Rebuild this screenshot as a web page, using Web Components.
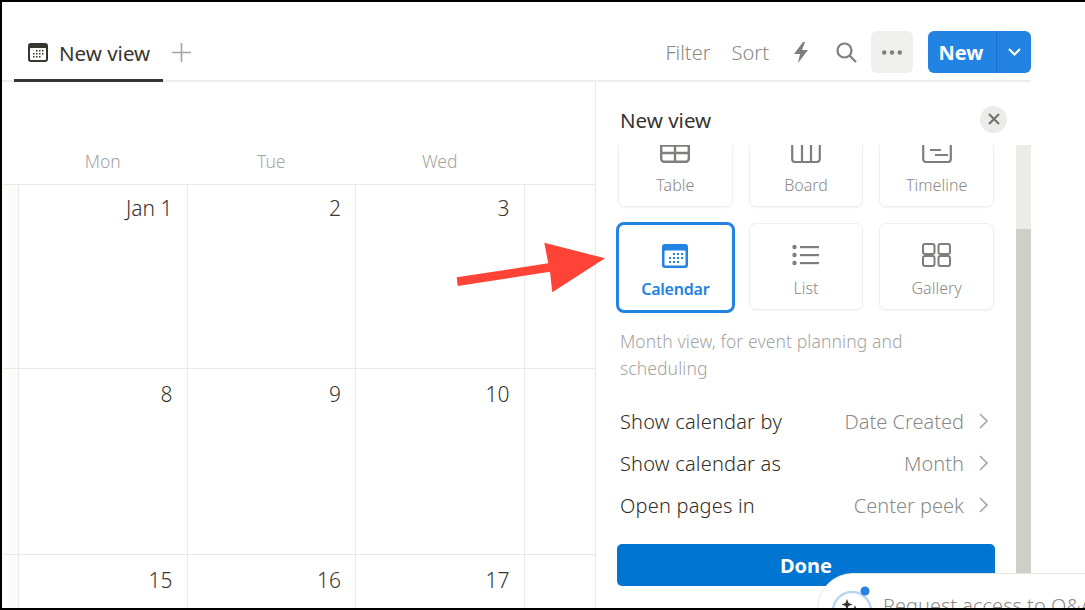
<!DOCTYPE html>
<html>
<head>
<meta charset="utf-8">
<title>New view</title>
<style>
  html, body { margin: 0; height: 100%; overflow: hidden; background: #fff; }
  body { font-family: "Noto Sans", "Open Sans", sans-serif; color: #37352f; }
</style>
</head>
<body>
<app-frame>
  <top-bar></top-bar>
  <div slot="main">
    <calendar-grid></calendar-grid>
    <view-panel>
      <layout-card name="Table">
        <svg style="margin-bottom:6px" viewBox="0 0 30 28" width="30" height="28" fill="none" stroke="#7f7e7a" stroke-width="2.400"><rect x="1.200" y="1.200" width="27.600" height="25.600" rx="3"/><path d="M1 10.500H29M1 18H29M15 10V27"/></svg>
      </layout-card>
      <layout-card name="Board">
        <svg style="margin-bottom:6px" viewBox="0 0 30 28" width="30" height="28" fill="none" stroke="#7f7e7a" stroke-width="2.200"><path d="M1.200 0V24a3 3 0 0 0 3 3H25.800a3 3 0 0 0 3-3V0M11 0V27M20 0V27"/></svg>
      </layout-card>
      <layout-card name="Timeline">
        <svg style="margin-bottom:6px" viewBox="0 0 30 28" width="30" height="28" fill="none" stroke="#7f7e7a" stroke-width="2.200"><rect x="1.200" y="1.200" width="27.600" height="25.800" rx="3"/><path d="M8 15H19M13 20H26" stroke-width="1.800"/></svg>
      </layout-card>
      <layout-card name="Calendar" selected>
        <svg viewBox="0 0 26 24" width="26" height="24"><rect width="26" height="24" rx="3" fill="#2383e2"/><rect x="2.500" y="6.500" width="21" height="15" fill="#fff" rx="1"/><g fill="#2383e2"><rect x="11" y="9" width="2" height="2"/><rect x="15" y="9" width="2" height="2"/><rect x="19" y="9" width="2" height="2"/><rect x="7" y="13" width="2" height="2"/><rect x="11" y="13" width="2" height="2"/><rect x="15" y="13" width="2" height="2"/><rect x="19" y="13" width="2" height="2"/><rect x="7" y="17" width="2" height="2"/><rect x="11" y="17" width="2" height="2"/><rect x="15" y="17" width="2" height="2"/></g></svg>
      </layout-card>
      <layout-card name="List">
        <svg viewBox="0 0 28 22" width="28" height="22" fill="#7f7e7a"><circle cx="2.500" cy="3" r="2.200"/><circle cx="2.500" cy="11" r="2.200"/><circle cx="2.500" cy="19" r="2.200"/><rect x="8" y="2" width="19" height="2.200"/><rect x="8" y="10" width="19" height="2.200"/><rect x="8" y="18" width="19" height="2.200"/></svg>
      </layout-card>
      <layout-card name="Gallery">
        <svg viewBox="0 0 29 24" width="29" height="24" fill="none" stroke="#7f7e7a" stroke-width="2"><rect x="1" y="1" width="11.500" height="10" rx="2"/><rect x="16.500" y="1" width="11.500" height="10" rx="2"/><rect x="1" y="13" width="11.500" height="10" rx="2"/><rect x="16.500" y="13" width="11.500" height="10" rx="2"/></svg>
      </layout-card>
      <setting-row slot="settings" label="Show calendar by" value="Date Created"></setting-row>
      <setting-row slot="settings" label="Show calendar as" value="Month"></setting-row>
      <setting-row slot="settings" label="Open pages in" value="Center peek"></setting-row>
    </view-panel>
  </div>
  <callout-arrow></callout-arrow>
  <chat-bubble>Request access to Q&amp;A</chat-bubble>
</app-frame>

<script>
class AppFrame extends HTMLElement {
  constructor() {
    super();
    this.attachShadow({ mode: 'open' });
    this.shadowRoot.innerHTML = `
      <style>
        :host {
          display: block;
          position: relative;
          box-sizing: border-box;
          width: 1085px;
          height: 610px;
          overflow: hidden;
          border-top: 2px solid #000;
          border-left: 2px solid #000;
          border-bottom: 2px solid #000;
          background: #fff;
        }
        ::slotted([slot="main"]) {
          display: flex;
          width: 1029px;
          height: 526px;
        }
      </style>
      <slot></slot>
      <slot name="main"></slot>
    `;
  }
}
customElements.define('app-frame', AppFrame);

class TopBar extends HTMLElement {
  constructor() {
    super();
    this.attachShadow({ mode: 'open' });
    this.shadowRoot.innerHTML = `
      <style>
        :host {
          display: flex;
          box-sizing: border-box;
          width: 1029px;
          height: 80px;
          padding-left: 12px;
          align-items: flex-end;
          justify-content: space-between;
          border-bottom: 2px solid #ededec;
        }
        .tabs {
          display: flex;
          align-items: flex-end;
        }
        .tab {
          display: flex;
          align-items: center;
          gap: 11px;
          box-sizing: border-box;
          width: 149px;
          height: 50px;
          margin-bottom: -2px;
          padding: 0 0 6px 14px;
          border-bottom: 3px solid #37352f;
          font-size: 20.500px;
        }
        .plus {
          display: block;
          margin: 0 0 18px 9px;
        }
        .actions {
          display: flex;
          align-items: center;
          height: 42px;
          margin-bottom: 7px;
          color: #8b8a86;
          font-size: 20px;
          font-weight: 300;
        }
        .filter { margin-right: 21px; }
        .sort { margin-right: 24px; }
        .bolt { margin-right: 27px; display: block; }
        .search { margin-right: 14px; display: block; }
        .more {
          display: flex;
          align-items: center;
          justify-content: center;
          width: 42px;
          height: 42px;
          margin-right: 15px;
          border-radius: 6px;
          background: #efefee;
        }
        .new {
          display: flex;
          width: 103px;
          height: 42px;
          border-radius: 6px;
          background: #2383e2;
          color: #fff;
          font-weight: 700;
          font-size: 20px;
        }
        .new span {
          display: flex;
          align-items: center;
          justify-content: center;
          width: 66px;
          padding-right: 2px;
          border-right: 1px solid #1e72c8;
        }
        .new i {
          display: flex;
          flex: 1;
          align-items: center;
          justify-content: center;
        }
      </style>
      <div class="tabs">
        <div class="tab">
          <svg viewBox="0 0 20 19" width="20" height="19"><rect width="20" height="19" rx="3" fill="#37352f"/><rect x="2" y="5" width="16" height="12" rx="1" fill="#fff"/><g fill="#37352f"><rect x="8" y="7" width="1.500" height="1.500"/><rect x="11" y="7" width="1.500" height="1.500"/><rect x="14" y="7" width="1.500" height="1.500"/><rect x="5" y="10" width="1.500" height="1.500"/><rect x="8" y="10" width="1.500" height="1.500"/><rect x="11" y="10" width="1.500" height="1.500"/><rect x="14" y="10" width="1.500" height="1.500"/><rect x="5" y="13" width="1.500" height="1.500"/><rect x="8" y="13" width="1.500" height="1.500"/><rect x="11" y="13" width="1.500" height="1.500"/></g></svg>
          <span>New view</span>
        </div>
        <svg class="plus" viewBox="0 0 19 19" width="19" height="19" fill="none" stroke="#a5a4a1" stroke-width="1.600"><path d="M9.500 0V19M0 9.500H19"/></svg>
      </div>
      <div class="actions">
        <span class="filter">Filter</span>
        <span class="sort">Sort</span>
        <svg class="bolt" viewBox="0 0 16 21" width="16" height="21" fill="#7f7e7a"><path d="M10 0L1 12H7L5 21L15 8H9L12 0Z"/></svg>
        <svg class="search" viewBox="0 0 21 21" width="21" height="21" fill="none" stroke="#7f7e7a" stroke-width="2.200"><circle cx="8.500" cy="8.500" r="7"/><path d="M13.500 13.500L20 20"/></svg>
        <div class="more"><svg viewBox="0 0 20 5" width="20" height="5" fill="#7f7e7a"><circle cx="2.200" cy="2.500" r="2.200"/><circle cx="10" cy="2.500" r="2.200"/><circle cx="17.800" cy="2.500" r="2.200"/></svg></div>
        <div class="new"><span>New</span><i><svg viewBox="0 0 13 8" width="13" height="8" fill="none" stroke="#fff" stroke-width="2"><path d="M1 1L6.500 6.500L12 1"/></svg></i></div>
      </div>
    `;
  }
}
customElements.define('top-bar', TopBar);

class CalendarGrid extends HTMLElement {
  constructor() {
    super();
    this.attachShadow({ mode: 'open' });
  }

  connectedCallback() {
    const days = ['', 'Mon', 'Tue', 'Wed', ''];
    const weeks = [
      ['', 'Jan 1', '2', '3', ''],
      ['', '8', '9', '10', ''],
      ['', '15', '16', '17', '']
    ];
    this.shadowRoot.innerHTML = `
      <style>
        :host {
          display: block;
          flex: 0 0 593px;
          width: 593px;
          overflow: hidden;
        }
        .grid {
          display: grid;
          width: 700px;
          grid-template-columns: 17px repeat(4, 168.5px);
          grid-template-rows: 103px 184px 186px 100px;
        }
        .day {
          display: flex;
          align-items: flex-end;
          justify-content: center;
          box-sizing: border-box;
          padding: 0 1px 10px 0;
          border-bottom: 1px solid #e9e9e7;
          color: #a5a4a1;
          font-size: 17.500px;
          font-weight: 300;
          line-height: 25px;
        }
        .cell {
          box-sizing: border-box;
          padding: 11px 14px 0 0;
          text-align: right;
          border-right: 1px solid #e9e9e7;
          border-bottom: 1px solid #e9e9e7;
          font-size: 21px;
          font-weight: 300;
          line-height: 28px;
          color: #37352f;
        }
        .first { padding-top: 9px; }
        .off { background: #fbfbfa; }
      </style>
      <div class="grid">
        ${days.map(d => `<div class="day">${d}</div>`).join('')}
        ${weeks.map((w, r) => w.map((d, i) => `<div class="cell ${i === 0 ? 'off' : ''} ${r === 0 ? 'first' : ''}">${d}</div>`).join('')).join('')}
      </div>
    `;
  }
}
customElements.define('calendar-grid', CalendarGrid);

class ViewPanel extends HTMLElement {
  constructor() {
    super();
    this.attachShadow({ mode: 'open' });
    this.shadowRoot.innerHTML = `
      <style>
        :host {
          display: flex;
          flex-direction: column;
          box-sizing: border-box;
          width: 436px;
          height: 526px;
          border-left: 1px solid #e9e9e7;
        }
        header {
          display: flex;
          align-items: center;
          justify-content: space-between;
          box-sizing: border-box;
          height: 63px;
          padding: 13px 24px 0 24px;
          font-size: 20.500px;
        }
        .close {
          display: flex;
          align-items: center;
          justify-content: center;
          width: 27px;
          height: 27px;
          margin-top: -2px;
          border-radius: 50%;
          background: #ebebea;
        }
        .body {
          display: flex;
          flex: 1;
          min-height: 0;
        }
        .scroll {
          flex: 1;
          overflow: hidden;
          padding: 0 22px;
        }
        .cards {
          display: grid;
          grid-template-columns: repeat(3, 1fr);
          grid-auto-rows: 87px;
          gap: 16px;
          margin-top: -25px;
        }
        .desc {
          max-width: 300px;
          margin: 18px 2px 18px;
          color: #a5a4a1;
          font-size: 17.500px;
          font-weight: 300;
          line-height: 27px;
          letter-spacing: 0.1px;
        }
        .done {
          display: flex;
          align-items: center;
          justify-content: center;
          height: 42px;
          margin: 18px -1px 0;
          border-radius: 5px;
          background: #0075d2;
          color: #fff;
          font-size: 20px;
          font-weight: 700;
        }
        .bar {
          flex: 0 0 15px;
          background: linear-gradient(#ecebe7 84px, #cfcec9 84px);
        }
      </style>
      <header>
        <span>New view</span>
        <div class="close"><svg viewBox="0 0 12 12" width="12" height="12" fill="none" stroke="#6f6e6a" stroke-width="2"><path d="M1 1L11 11M11 1L1 11"/></svg></div>
      </header>
      <div class="body">
        <div class="scroll">
          <div class="cards"><slot></slot></div>
          <p class="desc">Month view, for event planning and scheduling</p>
          <slot name="settings"></slot>
          <div class="done">Done</div>
        </div>
        <div class="bar"></div>
      </div>
    `;
  }
}
customElements.define('view-panel', ViewPanel);

class LayoutCard extends HTMLElement {
  constructor() {
    super();
    this.attachShadow({ mode: 'open' });
  }

  connectedCallback() {
    const name = this.getAttribute('name');
    this.shadowRoot.innerHTML = `
      <style>
        :host {
          display: flex;
          flex-direction: column;
          align-items: center;
          box-sizing: border-box;
          height: 87px;
          border: 1px solid #efefee;
          box-shadow: 0 1px 2px #f3f3f2;
          border-radius: 7px;
          color: #8b8a86;
          font-size: 16px;
          font-weight: 300;
        }
        :host([selected]) {
          border: 3px solid #2383e2;
          margin: -1px -2px;
          box-shadow: none;
          height: 91px;
          border-radius: 8px;
          color: #2383e2;
          font-weight: 600;
          letter-spacing: -0.2px;
        }
        .icon {
          display: flex;
          align-items: center;
          justify-content: center;
          box-sizing: border-box;
          flex: 0 0 53px;
          padding-top: 9px;
        }
        :host([selected]) .icon { padding-top: 8px; }
        .name { line-height: 22px; }
      </style>
      <div class="icon"><slot></slot></div>
      <div class="name">${name}</div>
    `;
  }
}
customElements.define('layout-card', LayoutCard);

class SettingRow extends HTMLElement {
  constructor() {
    super();
    this.attachShadow({ mode: 'open' });
  }

  connectedCallback() {
    this.shadowRoot.innerHTML = `
      <style>
        :host {
          display: flex;
          align-items: center;
          justify-content: space-between;
          box-sizing: border-box;
          height: 42px;
          padding: 0 6px 0 2px;
          font-size: 20px;
          font-weight: 300;
        }
        .label {
          letter-spacing: 0.2px;
          color: #2f2d28;
        }
        .value {
          display: flex;
          align-items: center;
          gap: 15px;
          color: #8b8a86;
        }
      </style>
      <span class="label">${this.getAttribute('label')}</span>
      <span class="value">${this.getAttribute('value')}
        <svg viewBox="0 0 9 16" width="9" height="16" fill="none" stroke="#a8a7a3" stroke-width="1.600"><path d="M1 1L8 8L1 15"/></svg>
      </span>
    `;
  }
}
customElements.define('setting-row', SettingRow);

class CalloutArrow extends HTMLElement {
  constructor() {
    super();
    this.attachShadow({ mode: 'open' });
    this.shadowRoot.innerHTML = `
      <style>
        :host {
          display: block;
          position: absolute;
          left: 452px;
          top: 236px;
          width: 154px;
          height: 58px;
        }
        svg { display: block; }
      </style>
      <svg viewBox="454 238 154 58" width="154" height="58"><polygon fill="#ff4336" points="456.700,277.300 457.700,286 550,271.700 552.300,292.300 605,258.300 544.300,242.700 548.300,263.300"/></svg>
    `;
  }
}
customElements.define('callout-arrow', CalloutArrow);

class ChatBubble extends HTMLElement {
  constructor() {
    super();
    this.attachShadow({ mode: 'open' });
    this.shadowRoot.innerHTML = `
      <style>
        :host {
          display: block;
          position: absolute;
          left: 815px;
          top: 571px;
          box-sizing: border-box;
          width: 420px;
          height: 90px;
          border: 1px solid #e6e6e5;
          border-radius: 36px;
          background: #fff;
        }
        svg {
          position: absolute;
          left: 10px;
          top: 8px;
        }
        .label {
          position: absolute;
          left: 65px;
          top: 18px;
          white-space: nowrap;
          color: #8b8a86;
          font-size: 20px;
          font-weight: 300;
          line-height: 28px;
        }
      </style>
      <svg viewBox="0 0 48 50" width="48" height="50">
        <circle cx="24" cy="29" r="19" fill="none" stroke="#b9d6f5" stroke-width="2.500"/>
        <circle cx="37" cy="9" r="4.500" fill="#2383e2"/>
        <path fill="#37352f" d="M19 17L20.500 21L24.500 22.500L20.500 24L19 28L17.500 24L13.500 22.500L17.500 21Z"/>
        <path fill="#37352f" d="M27 23L29 29L35 31L29 33L27 39L25 33L19 31L25 29Z"/>
      </svg>
      <span class="label"><slot></slot></span>
    `;
  }
}
customElements.define('chat-bubble', ChatBubble);
</script>
</body>
</html>
